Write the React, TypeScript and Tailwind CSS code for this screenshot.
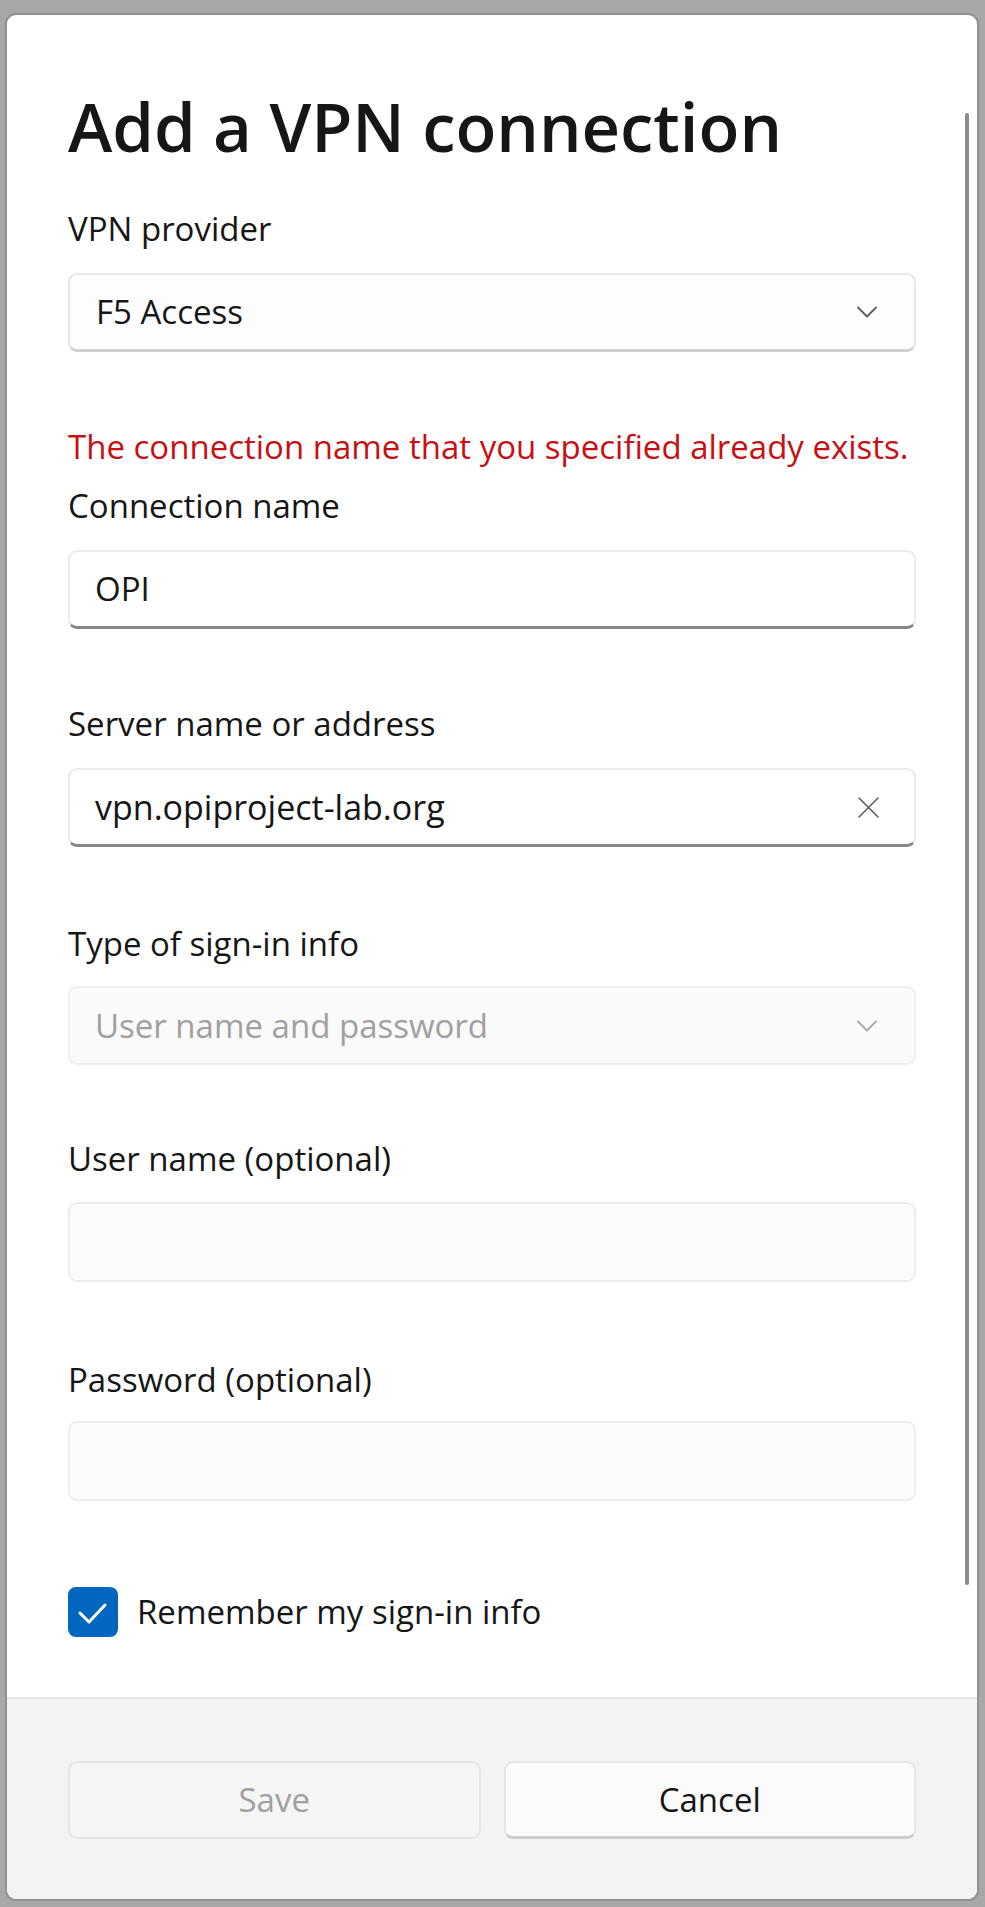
import React from 'react'

function Chevron({ color = '#5c5c5c' }: { color?: string }) {
  return (
    <svg width="20" height="12" viewBox="0 0 20 12" fill="none">
      <path d="M1 1.5 L10 10.5 L19 1.5" stroke={color} strokeWidth="1.8" strokeLinecap="round" strokeLinejoin="round" />
    </svg>
  )
}

function ClearIcon() {
  return (
    <svg width="21" height="21" viewBox="0 0 21 21" fill="none">
      <path d="M1 1 L20 20 M20 1 L1 20" stroke="#5c5c5c" strokeWidth="1.6" strokeLinecap="round" />
    </svg>
  )
}

function Label({ children, className = '' }: { children: React.ReactNode; className?: string }) {
  return <div className={`h-[44px] leading-[44px] text-[33px] text-[#161616] whitespace-nowrap ${className}`}>{children}</div>
}

export default function App() {
  return (
    <div className="w-[985px] h-[1907px] bg-[#a7a7a7] pt-[13px] pl-[5px] font-['Open_Sans','Noto_Sans',sans-serif] overflow-hidden">
      <div className="relative w-[974px] h-[1888px] border-2 border-[#909090] rounded-[11px] overflow-hidden bg-white flex flex-col">
        {/* scroll thumb */}
        <div className="absolute left-[958px] top-[98px] w-[4px] h-[1472px] rounded-full bg-[#8b8b8b]" />

        <div className="h-[1682px] px-[61px] pt-[65px]">
          <h1 className="h-[92px] leading-[92px] text-[67px] font-semibold text-[#161616] whitespace-nowrap">
            Add a VPN connection
          </h1>

          <Label className="mt-[35px]">VPN provider</Label>
          <div className="mt-[22px] h-[79px] rounded-[9px] border-2 border-[#e8e8e8] border-b-[3px] border-b-[#d0d0d0] bg-[#fdfdfd] flex items-center justify-between pl-[26px] pr-[37px]">
            <span className="text-[33px] leading-[44px] text-[#161616]">F5 Access</span>
            <Chevron />
          </div>

          <div className="mt-[73px] h-[44px] leading-[44px] text-[33px] text-[#c80f14] whitespace-nowrap">
            The connection name that you specified already exists.
          </div>
          <Label className="mt-[15px]">Connection name</Label>
          <div className="mt-[22px] h-[79px] rounded-[9px] border-2 border-[#ebebeb] border-b-[3px] border-b-[#868686] bg-white flex items-center pl-[25px]">
            <span className="text-[33px] leading-[44px] text-[#161616]">OPI</span>
          </div>

          <Label className="mt-[73px]">Server name or address</Label>
          <div className="mt-[22px] h-[79px] rounded-[9px] border-2 border-[#ebebeb] border-b-[3px] border-b-[#868686] bg-white flex items-center justify-between pl-[25px] pr-[35px]">
            <span className="text-[34px] leading-[44px] text-[#161616]">vpn.opiproject-lab.org</span>
            <ClearIcon />
          </div>

          <Label className="mt-[75px]">Type of sign-in info</Label>
          <div className="mt-[20px] h-[79px] rounded-[9px] border-2 border-[#efefef] bg-[#fafafa] flex items-center justify-between pl-[25px] pr-[37px]">
            <span className="text-[33px] leading-[44px] text-[#a0a0a0]">User name and password</span>
            <Chevron color="#a8a8a8" />
          </div>

          <Label className="mt-[72px]">User name (optional)</Label>
          <div className="mt-[21px] h-[80px] rounded-[9px] border-2 border-[#ededed] bg-[#fbfbfb]" />

          <Label className="mt-[76px]">Password (optional)</Label>
          <div className="mt-[19px] h-[80px] rounded-[9px] border-2 border-[#ededed] bg-[#fbfbfb]" />

          <div className="mt-[86px] h-[50px] flex items-center gap-[19px]">
            <div className="w-[50px] h-[50px] rounded-[8px] bg-[#0067c0] flex items-center justify-center">
              <svg width="50" height="50" viewBox="0 0 50 50" fill="none">
                <path d="M12 26 L21 35 L37 18" stroke="#ffffff" strokeWidth="3" strokeLinecap="round" strokeLinejoin="round" />
              </svg>
            </div>
            <span className="text-[33px] leading-[44px] text-[#161616] whitespace-nowrap">Remember my sign-in info</span>
          </div>
        </div>

        <div className="flex-1 border-t-2 border-[#e5e5e5] bg-[#f3f3f3] px-[61px] pt-[62px]">
          <div className="flex gap-[23px]">
            <div className="flex-1 h-[78px] rounded-[9px] border-2 border-[#e6e6e6] bg-[#f5f5f5] flex items-center justify-center text-[33px] text-[#a0a0a0]">
              Save
            </div>
            <div className="flex-1 h-[78px] rounded-[9px] border-2 border-[#e6e6e6] border-b-[3px] border-b-[#cccccc] bg-[#fbfbfb] flex items-center justify-center text-[33px] text-[#161616]">
              Cancel
            </div>
          </div>
        </div>
      </div>
    </div>
  )
}
